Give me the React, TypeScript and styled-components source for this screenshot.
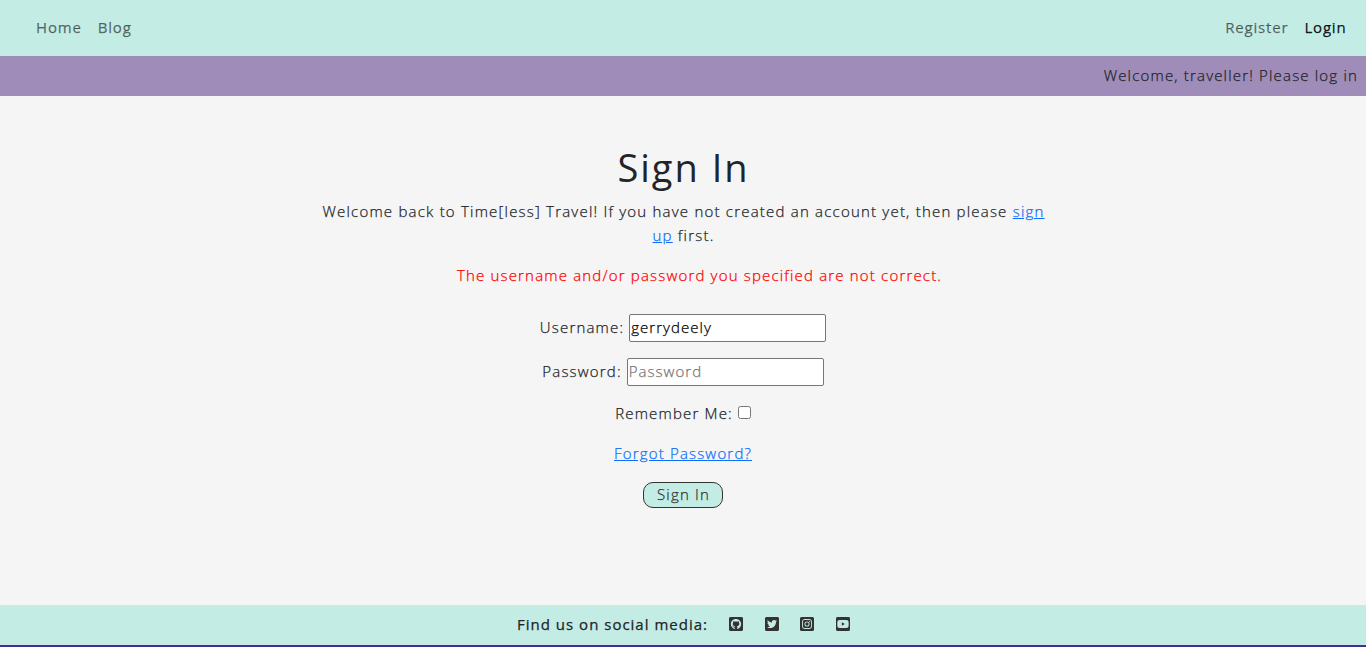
import React from "react";
import styled, { createGlobalStyle } from "styled-components";
import { FaGithubSquare, FaTwitterSquare, FaInstagramSquare, FaYoutubeSquare } from "react-icons/fa";

const GlobalStyle = createGlobalStyle`
  *, *::before, *::after { box-sizing: border-box; }
  body {
    margin: 0;
    background: #f5f5f5;
    color: #212529;
    font: 300 15px/24px "Open Sans", sans-serif;
    letter-spacing: 1.18px;
    -webkit-text-stroke: 0.25px;
  }
`;

const Page = styled.div`
  display: flex;
  flex-direction: column;
  height: 647px;
`;

const Navbar = styled.nav`
  display: flex;
  justify-content: space-between;
  align-items: center;
  height: 56px;
  padding: 0 19.5px 2px 36px;
  background: #c3ece5;
`;

const NavGroup = styled.div`
  display: flex;
  gap: 16px;
`;

const NavLink = styled.a<{ $active?: boolean }>`
  font-weight: 400;
  letter-spacing: 0.82px;
  -webkit-text-stroke: 0.25px;
  color: ${(p) => (p.$active ? "rgba(0, 0, 0, 0.9)" : "rgba(0, 0, 0, 0.55)")};
`;

const WelcomeBar = styled.div`
  display: flex;
  justify-content: flex-end;
  align-items: center;
  height: 40px;
  padding: 0 8px 2px 0;
  background: #a08cb9;
`;

const Main = styled.main`
  flex: 1;
  display: flex;
  flex-direction: column;
  align-items: center;
  padding-top: 47px;
`;

const Title = styled.h1`
  margin: 0 0 8px;
  padding-left: 1px;
  font-size: 38px;
  font-weight: 400;
  line-height: 48px;
  letter-spacing: 2px;
  -webkit-text-stroke: 0;
`;

const Intro = styled.p`
  width: 728px;
  margin: 0 0 16px;
  padding-left: 1px;
  text-align: center;
  letter-spacing: 1.21px;
`;

const Link = styled.a`
  color: #0d6efd;
  text-decoration: underline;
`;

const ErrorText = styled.p`
  margin: 0 0 27px;
  padding-left: 33px;
  color: #ff0000;
`;

const Field = styled.label`
  display: flex;
  align-items: center;
  gap: 5px;
  height: 28px;
  margin-bottom: 16px;
`;

const FieldName = styled.span`
  padding-bottom: 2px;
`;

const Input = styled.input`
  width: 197px;
  height: 28px;
  padding: 1px 1px 3px;
  border: 1px solid #767676;
  border-radius: 2px;
  background: #fff;
  color: #000;
  font: inherit;
  letter-spacing: 1.05px;
  &::placeholder { color: #757575; }
`;

const Remember = styled.label`
  display: flex;
  align-items: flex-start;
  gap: 5px;
  height: 24px;
  margin: -1px 0 16px;
`;

const Checkbox = styled.input`
  width: 13px;
  height: 13px;
  margin: 5px 0 0;
`;

const Submit = styled.button`
  width: 80px;
  height: 26px;
  margin-top: 17px;
  padding: 0 0 3px 1px;
  border: 1px solid #333;
  border-radius: 10px;
  background: #c3ece5;
  color: #333;
  font: inherit;
  line-height: 22px;
  letter-spacing: inherit;
`;

const Footer = styled.footer`
  display: flex;
  justify-content: center;
  align-items: center;
  gap: 21.5px;
  height: 42px;
  padding-left: 1px;
  background: #c3ece5;
  border-bottom: 2px solid #432e92;
`;

const FooterText = styled.span`
  padding-bottom: 2px;
  font-weight: 400;
  letter-spacing: 1px;
  -webkit-text-stroke: 0.25px;
`;

const SocialLink = styled.a`
  display: flex;
  width: 14px;
  margin-top: -2px;
  color: #333;
  font-size: 16px;

  svg {
    flex: none;
    width: 14px;
  }
`;

const socials = [FaGithubSquare, FaTwitterSquare, FaInstagramSquare, FaYoutubeSquare];

export default function App() {
  return (
    <Page>
      <GlobalStyle />
      <Navbar>
        <NavGroup>
          <NavLink>Home</NavLink>
          <NavLink>Blog</NavLink>
        </NavGroup>
        <NavGroup>
          <NavLink>Register</NavLink>
          <NavLink $active>Login</NavLink>
        </NavGroup>
      </Navbar>
      <WelcomeBar>Welcome, traveller! Please log in</WelcomeBar>
      <Main>
        <Title>Sign In</Title>
        <Intro>
          Welcome back to Time[less] Travel! If you have not created an account yet, then please{" "}
          <Link>sign up</Link> first.
        </Intro>
        <ErrorText>The username and/or password you specified are not correct.</ErrorText>
        <Field>
          <FieldName>Username:</FieldName>
          <Input defaultValue="gerrydeely" />
        </Field>
        <Field>
          <FieldName>Password:</FieldName>
          <Input type="password" placeholder="Password" />
        </Field>
        <Remember>
          <FieldName>Remember Me:</FieldName>
          <Checkbox type="checkbox" />
        </Remember>
        <Link>Forgot Password?</Link>
        <Submit>Sign In</Submit>
      </Main>
      <Footer>
        <FooterText>Find us on social media:</FooterText>
        {socials.map((Icon, i) => (
          <SocialLink key={i}>
            <Icon />
          </SocialLink>
        ))}
      </Footer>
    </Page>
  );
}
